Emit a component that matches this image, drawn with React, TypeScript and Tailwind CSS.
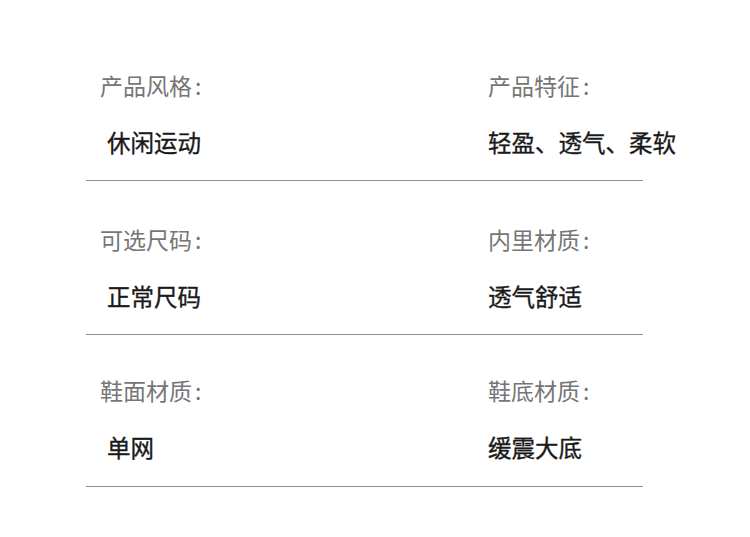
import React from "react";

const rows = [
  [
    ["产品风格:", "休闲运动"],
    ["产品特征:", "轻盈、透气、柔软"],
  ],
  [
    ["可选尺码:", "正常尺码"],
    ["内里材质:", "透气舒适"],
  ],
  [
    ["鞋面材质:", "单网"],
    ["鞋底材质:", "缓震大底"],
  ],
];

export default function App() {
  return (
    <div
      className="w-[750px] h-[537px] bg-white pt-[27px] pl-[86px]"
      style={{ fontFamily: '"Noto Sans CJK SC", "Noto Sans", sans-serif' }}
    >
      <div className="w-[557px]">
        {rows.map((row, i) => (
          <div
            key={i}
            className={`flex border-b border-[#8f8f8f] ${i === 2 ? "pt-[40px] pb-[24px]" : "pt-[43px] pb-[23px]"}`}
          >
            <div className="w-[402px] shrink-0 flex flex-col">
              <div className="pl-[14px] h-[30px] leading-[30px] text-[23px] text-[#767676] whitespace-nowrap">
                {row[0][0].slice(0, -1)}
                <span className="ml-[3px]">:</span>
              </div>
              <div className="pl-[21px] mt-[27px] h-[30px] leading-[30px] text-[23.5px] text-[#1a1a1a] [-webkit-text-stroke:0.35px_#1a1a1a] whitespace-nowrap">
                {row[0][1]}
              </div>
            </div>
            <div className="w-[155px] shrink-0 flex flex-col">
              <div className="h-[30px] leading-[30px] text-[23px] text-[#767676] whitespace-nowrap">
                {row[1][0].slice(0, -1)}
                <span className="ml-[3px]">:</span>
              </div>
              <div className="mt-[27px] h-[30px] leading-[30px] text-[23.5px] text-[#1a1a1a] [-webkit-text-stroke:0.35px_#1a1a1a] whitespace-nowrap">
                {row[1][1]}
              </div>
            </div>
          </div>
        ))}
      </div>
    </div>
  );
}
